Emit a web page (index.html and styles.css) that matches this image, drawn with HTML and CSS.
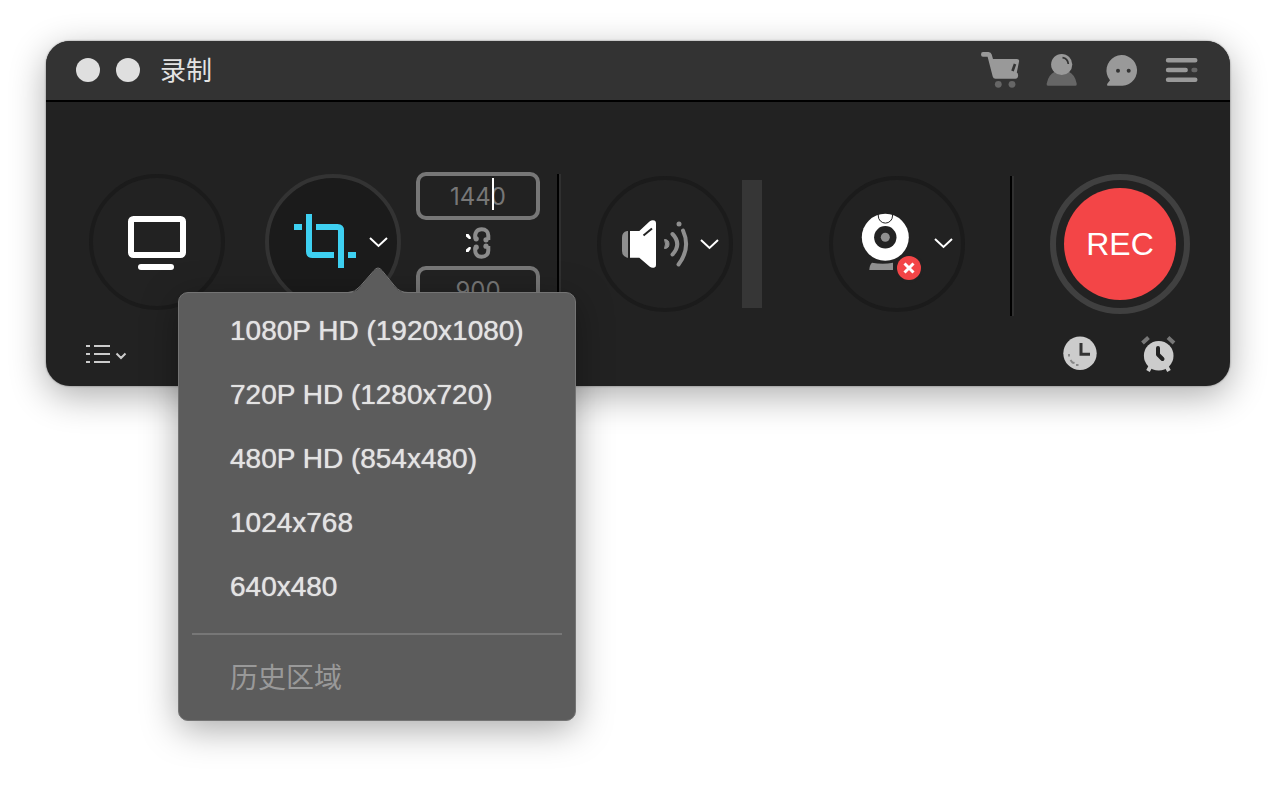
FILE: index.html
```html
<!DOCTYPE html>
<html lang="zh-CN">
<head>
<meta charset="utf-8">
<meta name="viewport" content="width=device-width, initial-scale=1">
<title>录制</title>
<link rel="stylesheet" href="styles.css">
</head>
<body>
<main class="recorder">
  <header class="titlebar">
    <div class="window-buttons">
      <button class="light" type="button" aria-label="关闭"></button>
      <button class="light" type="button" aria-label="最小化"></button>
    </div>
    <h1 class="title">录制</h1>
    <nav class="toolbar">
      <button class="icon-button" type="button" aria-label="购物车">
        <svg class="tool-icon" viewBox="0 0 40 40">
          <path d="M1 2H6.5Q9 2 9.700 4.500L11 9H35Q37.600 9 37 11.800L34.800 22.500Q36.500 23.500 36 26.500Q35.600 28.700 33.500 28.700H13.500Q11.300 28.700 10.700 26.500L5.600 6.700H1Q-1 6.700-1 4.400Q-1 2 1 2Z" fill="#999"/>
          <path d="M33 14L30.500 21" stroke="#333" stroke-width="2.600"/>
          <circle cx="16.300" cy="34.300" r="3.400" fill="#666"/>
          <circle cx="30" cy="34.300" r="3.400" fill="#666"/>
        </svg>
      </button>
      <button class="icon-button" type="button" aria-label="账户">
        <svg class="tool-icon" viewBox="0 0 40 40">
          <path d="M6 35.700Q4.200 35.700 4.700 33.500Q6.500 24.500 13 21.500H26.500Q33 24.500 34.700 33.500Q35.100 35.700 33.500 35.700Z" fill="#666"/>
          <circle cx="19.700" cy="14.500" r="10.600" fill="#999"/>
          <path d="M20.500 7.700Q25.800 8.500 26.300 14" stroke="#333" stroke-width="1.700" fill="none"/>
        </svg>
      </button>
      <button class="icon-button" type="button" aria-label="反馈">
        <svg class="tool-icon" viewBox="0 0 40 40">
          <path d="M20.400 35.700H6.500Q4.400 35.700 5.300 33.700L8 30.200A15.300 15.300 0 1 1 20.400 35.700Z" fill="#999"/>
          <circle cx="16" cy="20.700" r="2" fill="#333"/>
          <circle cx="26.700" cy="20.700" r="2" fill="#333"/>
        </svg>
      </button>
      <button class="icon-button" type="button" aria-label="菜单">
        <svg class="tool-icon" viewBox="0 0 40 40" stroke="#999" stroke-width="4.400" stroke-linecap="round">
          <path d="M6 10.300H33.300M6 20H23.700M6 29.700H33.300"/>
          <path d="M31.500 20H33.300" stroke="#666"/>
        </svg>
      </button>
    </nav>
  </header>

  <section class="stage">
    <div class="group group-video">
      <div class="dial dial-single">
        <button class="icon-button" type="button" aria-label="全屏">
          <svg class="dial-icon" viewBox="0 0 68 68">
            <rect x="8" y="11" width="52" height="36" rx="2.500" fill="none" stroke="#fff" stroke-width="6"/>
            <rect x="15" y="56" width="36" height="6" rx="3" fill="#fff"/>
          </svg>
        </button>
      </div>
      <div class="dial-anchor">
        <div class="dial dial-active">
          <button class="icon-button" type="button" aria-label="自定义区域">
            <svg class="dial-icon" viewBox="0 0 68 68" fill="none" stroke="#3ed0f1" stroke-width="6">
              <path d="M5 19H13M59 47H67"/>
              <path d="M20 6V43.500Q20 47 23.500 47H45"/>
              <path d="M27 19H48.500Q52 19 52 22.500V60"/>
            </svg>
          </button>
          <button class="icon-button" type="button" aria-label="区域尺寸" aria-expanded="true">
            <svg class="chevron" viewBox="0 0 20 20"><path d="M3 6L11.500 14L20 6"/></svg>
          </button>
        </div>
        <div class="popover">
          <svg class="popover-tail" viewBox="0 0 60 27">
            <path d="M0 26Q7 26 12 20L26 4Q30-1 34 4L47 20Q52 26 60 26V27H0Z" fill="#5c5c5c"/>
            <path d="M0 25.500Q7 25.500 12 19.500L26 3.500Q30-1.500 34 3.500L47 19.500Q52 25.500 60 25.500" fill="none" stroke="#747474" stroke-width="1"/>
          </svg>
          <ul class="size-list">
            <li><button class="size-item" type="button">1080P HD (1920x1080)</button></li>
            <li><button class="size-item" type="button">720P HD (1280x720)</button></li>
            <li><button class="size-item" type="button">480P HD (854x480)</button></li>
            <li><button class="size-item" type="button">1024x768</button></li>
            <li><button class="size-item" type="button">640x480</button></li>
          </ul>
          <hr class="separator">
          <button class="size-item size-history" type="button" disabled>历史区域</button>
        </div>
      </div>
      <div class="dimensions">
        <div class="field">
          <input class="dimension" type="text" value="1440" aria-label="宽度">
          <span class="caret"></span>
        </div>
        <button class="icon-button" type="button" aria-label="锁定比例">
          <svg class="link-icon" viewBox="0 0 32 46" fill="none">
            <g stroke="#8c8c8c" stroke-width="4">
              <path d="M13.300 18.500C12.500 12.500 15 9.300 19.700 9.300C24 9.300 26.300 12 26.300 15.500V20"/>
              <path d="M13.300 27.500C12.500 33.500 15 36.700 19.700 36.700C24 36.700 26.300 34 26.300 30.500V26"/>
            </g>
            <g fill="#8c8c8c">
              <circle cx="14.200" cy="18.800" r="2.600"/>
              <circle cx="24" cy="19.800" r="2.600"/>
              <circle cx="14.200" cy="27.200" r="2.600"/>
              <circle cx="24" cy="26.200" r="2.600"/>
            </g>
            <path d="M4 14H6.500L8.700 17V19H7L4 16.500ZM4 32H6.500L8.700 29V27H7L4 29.500Z" fill="#fff"/>
          </svg>
        </button>
        <input class="dimension" type="text" value="900" aria-label="高度">
      </div>
      <div class="divider"></div>
    </div>

    <div class="group group-audio">
      <div class="dial">
        <button class="icon-button" type="button" aria-label="系统声音">
          <svg class="dial-icon" viewBox="0 0 68 68" fill="none">
            <path d="M7 21V47.700H6Q1 46 1 41V27.500Q1 22 6 21Z" fill="#8f8f8f"/>
            <path d="M9 21H18.300L28.500 11.500Q31 9.500 33.500 10.500Q35 11 35 13V55Q35 57 33.500 57.500Q31 58.500 28.500 56.500L18.300 47.700H9Z" fill="#fff"/>
            <path d="M22.500 25.500L31 18.500" stroke="#222" stroke-width="2"/>
            <path d="M43.500 29.500Q48 29.500 48 34T43.500 38.500Q45.500 34 43.500 29.500Z" fill="#8f8f8f" stroke="#8f8f8f"/>
            <path d="M51.500 24Q61 34 51.500 44.500M62 20.500Q70 38 57.500 54.500" stroke="#8f8f8f" stroke-width="4" stroke-linecap="round"/>
            <circle cx="58" cy="14" r="2.500" fill="#8f8f8f"/>
          </svg>
        </button>
        <button class="icon-button" type="button" aria-label="声音选项">
          <svg class="chevron" viewBox="0 0 20 20"><path d="M2 6L10.500 14L19 6"/></svg>
        </button>
      </div>
      <div class="meter"></div>
    </div>

    <div class="group group-camera">
      <div class="dial">
        <button class="icon-button" type="button" aria-label="摄像头已关闭">
          <svg class="dial-icon" viewBox="0 0 68 68" fill="none">
            <circle cx="32.300" cy="27.300" r="23.500" fill="#fff"/>
            <circle cx="32.300" cy="27.300" r="11.200" fill="#222"/>
            <circle cx="32.300" cy="27.300" r="4.500" fill="#8f8f8f"/>
            <path d="M25.300 4.500V6A7 7 0 0 0 39.500 6V4.500" stroke="#222" stroke-width="1"/>
            <path d="M19 52.700Q30 55 40 52.700V60H16.300Q16.500 55 19 52.700Z" fill="#8f8f8f"/>
            <circle cx="56" cy="58" r="14.500" fill="#222"/>
            <circle cx="56" cy="58" r="12" fill="#f34547"/>
            <path d="M51.500 53.500L60.500 62.500M60.500 53.500L51.500 62.500" stroke="#fff" stroke-width="3"/>
          </svg>
        </button>
        <button class="icon-button" type="button" aria-label="摄像头选项">
          <svg class="chevron" viewBox="0 0 20 20"><path d="M4 5L12.500 13L21 5"/></svg>
        </button>
      </div>
      <div class="divider"></div>
    </div>

    <button class="record" type="button"><span class="record-face">REC</span></button>
  </section>

  <footer class="footer">
    <button class="icon-button list-button" type="button" aria-label="录制列表">
      <svg class="list-icon" viewBox="0 0 42 24" fill="none" stroke="#ccc" stroke-width="2">
        <path d="M0 4H4M8 4H24M0 12H4M8 12H24M0 20H4M8 20H24M30.500 11.500L35 16L39.500 11.500"/>
      </svg>
    </button>
    <button class="icon-button" type="button" aria-label="定时录制">
      <svg class="clock-icon" viewBox="0 0 36 36" fill="none">
        <circle cx="18" cy="17.300" r="16.700" fill="#ccc"/>
        <path d="M19 7V18.300H28" stroke="#333" stroke-width="3"/>
        <path d="M7 18V20.500M8.500 24L10.500 26.500L12.500 27M14 29H16.500" stroke="#888" stroke-width="2"/>
      </svg>
    </button>
    <button class="icon-button" type="button" aria-label="任务计划">
      <svg class="clock-icon" viewBox="0 0 36 36" fill="none">
        <path d="M2.500 7L8.500 1.500M28 1.500L34 7" stroke="#777" stroke-width="4"/>
        <path d="M11 29.500L8 35M26 29.500L29 35" stroke="#ccc" stroke-width="4"/>
        <circle cx="18.700" cy="19.700" r="14.800" fill="#ccc"/>
        <path d="M18 12V18.500L22.500 23" stroke="#222" stroke-width="4" stroke-linecap="round" stroke-linejoin="round"/>
      </svg>
    </button>
  </footer>
</main>
</body>
</html>
```
FILE: styles.css
```css
* {
  box-sizing: border-box;
}

body {
  min-height: 100vh;
  margin: 0;
  padding: 41px 46px;
  background: #fff;
  color: #e3e3e3;
  font-family: "Liberation Sans", "Noto Sans CJK SC", sans-serif;
}

button,
input {
  font: inherit;
}

svg {
  display: block;
  overflow: visible;
}

.recorder {
  background: #222;
  border-radius: 24px;
  box-shadow: 0 0 2px rgba(0, 0, 0, 0.5), 0 10px 36px rgba(0, 0, 0, 0.32);
}

/* Title bar */

.titlebar {
  display: flex;
  align-items: center;
  gap: 20px;
  padding: 9px 28px 10px 30px;
  background: #333;
  border-bottom: 2px solid #000;
  border-radius: 24px 24px 0 0;
}

.window-buttons {
  display: flex;
  gap: 16px;
}

.light {
  width: 24px;
  height: 24px;
  padding: 0;
  border: 0;
  border-radius: 50%;
  background: #dfdfdf;
}

.title {
  margin: 0;
  padding-top: 2px;
  font-size: 26px;
  line-height: 38px;
  font-weight: 400;
}

.toolbar {
  display: flex;
  gap: 20px;
  margin-left: auto;
}

.icon-button {
  padding: 0;
  border: 0;
  background: none;
  color: inherit;
}

.tool-icon {
  width: 40px;
  height: 40px;
}

/* Capture sources */

.stage {
  display: flex;
  align-items: flex-start;
  padding: 70px 40px 0 43px;
}

.group {
  display: flex;
  align-items: flex-start;
}

.group-video {
  margin-right: 36px;
}

.group-video .dial,
.group-video .divider {
  margin-top: 2px;
}

.group-audio,
.group-camera {
  padding-top: 4px;
}

.group-camera {
  margin-left: auto;
  margin-right: 36px;
}

.dial {
  display: flex;
  align-items: center;
  gap: 10px;
  width: 136px;
  height: 136px;
  padding-left: 20px;
  border: 4px solid #1b1b1b;
  border-radius: 50%;
}

.dial-single {
  justify-content: center;
  padding-left: 0;
  margin-right: 40px;
}

.dial-active {
  background: #1b1b1b;
  border-color: #333;
}

.dial-anchor {
  position: relative;
  margin-right: 15px;
}

.dial-icon {
  width: 68px;
  height: 68px;
}

.chevron {
  width: 20px;
  height: 20px;
  fill: none;
  stroke: #fff;
  stroke-width: 2;
}

.dimensions {
  display: flex;
  flex-direction: column;
  align-items: center;
  width: 124px;
  margin-right: 17px;
}

.field {
  position: relative;
}

.dimension {
  display: block;
  width: 124px;
  height: 48px;
  padding: 0;
  border: 4px solid #777;
  border-radius: 10px;
  background: transparent;
  color: #777;
  font-family: Inter, "Liberation Sans", sans-serif;
  font-size: 24px;
  text-align: center;
}

.caret {
  position: absolute;
  top: 6px;
  left: 76px;
  width: 2px;
  height: 32px;
  background: #fff;
}

.link-icon {
  width: 32px;
  height: 46px;
}

.divider {
  width: 4px;
  height: 140px;
  border-left: 2px solid #000;
  border-right: 2px solid #303030;
}

.group-camera .divider {
  margin-left: 45px;
}

.meter {
  width: 20px;
  height: 128px;
  margin: 4px 0 0 9px;
  background: #363636;
}

.record {
  width: 140px;
  height: 140px;
  margin-top: 2px;
  padding: 8px;
  border: 6px solid #404040;
  border-radius: 50%;
  background: transparent;
}

.record-face {
  display: flex;
  align-items: center;
  justify-content: center;
  height: 100%;
  border-radius: 50%;
  background: #f34547;
  color: #fff;
  font-size: 32px;
}

/* Size menu */

.popover {
  position: absolute;
  top: 120px;
  left: -87px;
  z-index: 1;
  width: 398px;
  padding: 6px 0 9px;
  border: 1px solid #747474;
  border-radius: 10px;
  background: #5c5c5c;
  box-shadow: 0 8px 36px rgba(0, 0, 0, 0.34);
}

.popover-tail {
  position: absolute;
  top: -26px;
  left: 169px;
  width: 60px;
  height: 27px;
}

.size-list {
  margin: 0;
  padding: 0;
  list-style: none;
}

.size-item {
  display: block;
  width: 100%;
  height: 64px;
  padding: 0 51px;
  border: 0;
  background: none;
  color: #e3e3e3;
  font-size: 28px;
  line-height: 64px;
  text-align: left;
  white-space: nowrap;
  text-shadow: 0 0 1px #e3e3e3;
}

.size-history {
  color: #999;
  text-shadow: none;
}

.separator {
  height: 2px;
  margin: 14px 13px 12px;
  border: 0;
  background: #777;
}

/* Bottom bar */

.footer {
  display: flex;
  align-items: center;
  padding: 20px 54px 14px 40px;
  gap: 42px;
}

.list-button {
  margin-right: auto;
}

.list-icon {
  width: 42px;
  height: 24px;
}

.clock-icon {
  width: 36px;
  height: 36px;
}
```
